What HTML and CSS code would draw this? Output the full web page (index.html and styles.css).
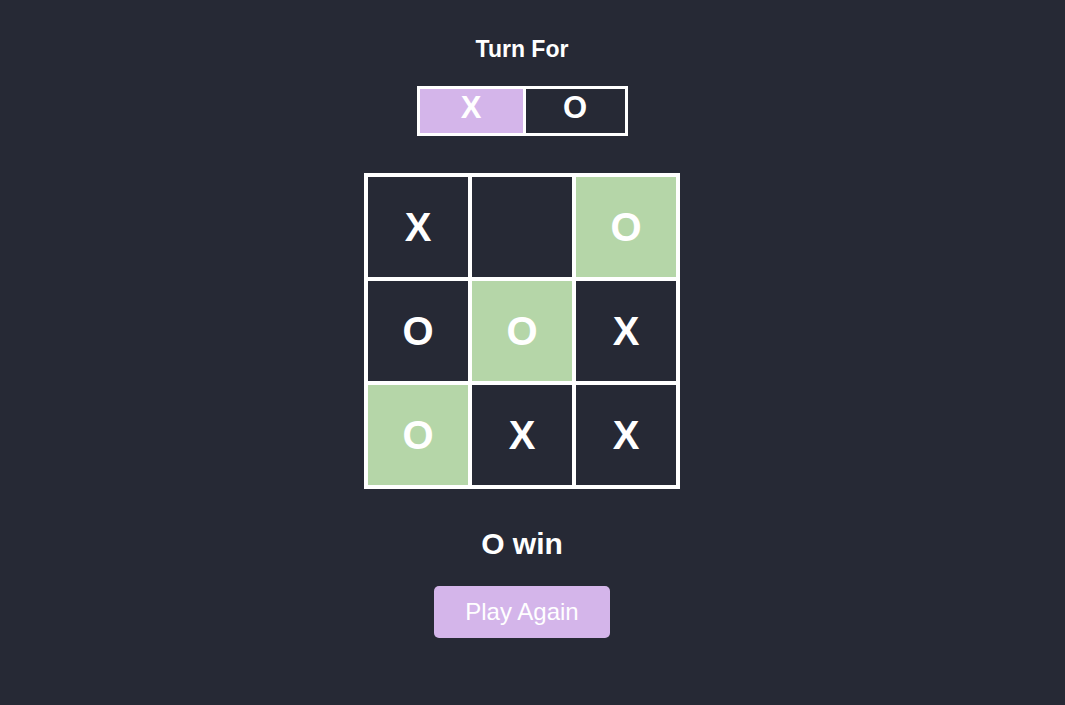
FILE: index.html
```html
<!DOCTYPE html>
<html>
<head>
<meta charset="utf-8">
<link rel="stylesheet" href="styles.css">
</head>
<body>
<main class="app">
  <h2 class="turn-title">Turn For</h2>
  <div class="turn">
    <div class="turn-cell turn-x active">X</div>
    <div class="turn-cell turn-o">O</div>
  </div>
  <div class="board">
    <div class="cell">X</div>
    <div class="cell"></div>
    <div class="cell win">O</div>
    <div class="cell">O</div>
    <div class="cell win">O</div>
    <div class="cell">X</div>
    <div class="cell win">O</div>
    <div class="cell">X</div>
    <div class="cell">X</div>
  </div>
  <div class="result">O win</div>
  <button class="again">Play Again</button>
</main>
</body>
</html>
```
FILE: styles.css
```css
html, body {
  margin: 0;
  padding: 0;
  background: #262935;
}
body {
  font-family: "Liberation Sans", Arial, sans-serif;
  color: #ffffff;
  height: 705px;
  overflow: hidden;
}
.app {
  width: 1044px;
  display: flex;
  flex-direction: column;
  align-items: center;
  padding-top: 35px;
}
.turn-title {
  margin: 0;
  font-size: 23px;
  font-weight: bold;
  line-height: 28px;
}
.turn {
  margin-top: 23px;
  display: flex;
  border: 3px solid #ffffff;
  background: #ffffff;
  gap: 3px;
}
.turn-cell {
  height: 44px;
  box-sizing: border-box;
  padding-bottom: 6px;
  display: flex;
  align-items: center;
  justify-content: center;
  font-size: 31px;
  font-weight: bold;
  background: #262935;
}
.turn-x { width: 103px; }
.turn-o { width: 99px; }
.turn-cell.active { background: #d4b5ea; }
.board {
  margin-top: 37px;
  display: grid;
  grid-template-columns: repeat(3, 100px);
  grid-template-rows: repeat(3, 100px);
  gap: 4px;
  padding: 4px;
  background: #ffffff;
}
.cell {
  background: #262935;
  display: flex;
  align-items: center;
  justify-content: center;
  font-size: 40px;
  font-weight: bold;
}
.cell.win { background: #b5d6a8; }
.result {
  margin-top: 38px;
  font-size: 30px;
  font-weight: bold;
  line-height: 34px;
}
.again {
  margin-top: 25px;
  width: 176px;
  height: 52px;
  border: none;
  border-radius: 5px;
  background: #d4b5ea;
  color: #ffffff;
  font-family: "Liberation Sans", Arial, sans-serif;
  font-size: 24px;
  padding: 0;
}
```
